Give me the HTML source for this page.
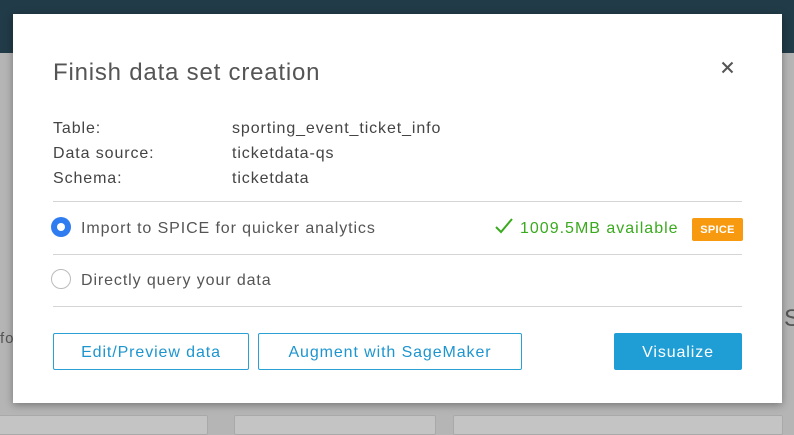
<!DOCTYPE html>
<html><head><meta charset="utf-8"><style>
*{box-sizing:border-box;margin:0;padding:0}
body{width:794px;height:424px;overflow:hidden;background:#b5b5b5;font-family:"Liberation Sans",sans-serif;position:relative;letter-spacing:0.9px}
.top{position:absolute;left:0;top:0;width:794px;height:53px;background:#213b48}
.card{position:absolute;top:415px;height:20px;background:#c4c4c4;border:1px solid #a9a9a9;border-radius:2px}
.dlg{position:absolute;left:13px;top:14px;width:769px;height:389px;background:#fff;box-shadow:0 2px 8px rgba(0,0,0,.35)}
.t{position:absolute;color:#444;font-size:16px;white-space:nowrap}
.line{position:absolute;left:40px;width:689px;height:1px;background:#d5d5d5}
.btn{position:absolute;top:319px;height:37px;border:1px solid #2aa0d4;border-radius:2px;color:#1d95cf;font-size:16px;display:flex;align-items:center;justify-content:center;background:#fff;padding-top:2px}
</style></head><body>
<div class="top"></div>
<div style="position:absolute;left:0;top:330px;font-size:15px;color:#555">fo</div>
<div style="position:absolute;left:784px;top:305px;font-size:24px;color:#555">S</div>
<div class="card" style="left:-5px;width:213px"></div>
<div class="card" style="left:234px;width:202px"></div>
<div class="card" style="left:453px;width:330px"></div>
<div class="dlg">
<div class="t" style="left:40px;top:45px;font-size:24px;color:#555;letter-spacing:0.8px">Finish data set creation</div>
<svg style="position:absolute;left:708px;top:47px" width="13" height="13" viewBox="0 0 13 13"><path d="M1.5 1.5L11.5 11.5M11.5 1.5L1.5 11.5" stroke="#555" stroke-width="2"/></svg>
<div class="t" style="left:40px;top:106px">Table:</div>
<div class="t" style="left:219px;top:106px">sporting_event_ticket_info</div>
<div class="t" style="left:40px;top:131px">Data source:</div>
<div class="t" style="left:219px;top:131px">ticketdata-qs</div>
<div class="t" style="left:40px;top:156px">Schema:</div>
<div class="t" style="left:219px;top:156px">ticketdata</div>
<div class="line" style="top:187px"></div>
<div style="position:absolute;left:38px;top:203px;width:20px;height:20px;border-radius:50%;background:#2f7cf0;display:flex;align-items:center;justify-content:center"><div style="width:8px;height:8px;border-radius:50%;background:#fff"></div></div>
<div class="t" style="left:68px;top:206px;color:#555">Import to SPICE for quicker analytics</div>
<svg style="position:absolute;left:481px;top:203px" width="20" height="18" viewBox="0 0 20 18"><path d="M2 10L7 15L18 2" fill="none" stroke="#3aaa1e" stroke-width="2"/></svg>
<div class="t" style="left:507px;top:206px;color:#3aaa1e;letter-spacing:1px">1009.5MB available</div>
<div style="position:absolute;left:679px;top:204px;width:51px;height:23px;background:#f79a0f;border-radius:2px;color:#fff;font-size:11px;font-weight:bold;display:flex;align-items:center;justify-content:center;letter-spacing:0.3px">SPICE</div>
<div class="line" style="top:240px"></div>
<div style="position:absolute;left:38px;top:255px;width:20px;height:20px;border-radius:50%;border:1.5px solid #bbb"></div>
<div class="t" style="left:68px;top:258px;color:#555">Directly query your data</div>
<div class="line" style="top:292px"></div>
<div class="btn" style="left:40px;width:196px">Edit/Preview data</div>
<div class="btn" style="left:245px;width:264px">Augment with SageMaker</div>
<div class="btn" style="left:601px;width:128px;background:#1f9ed6;border-color:#1f9ed6;color:#fff">Visualize</div>
</div>
</body></html>
